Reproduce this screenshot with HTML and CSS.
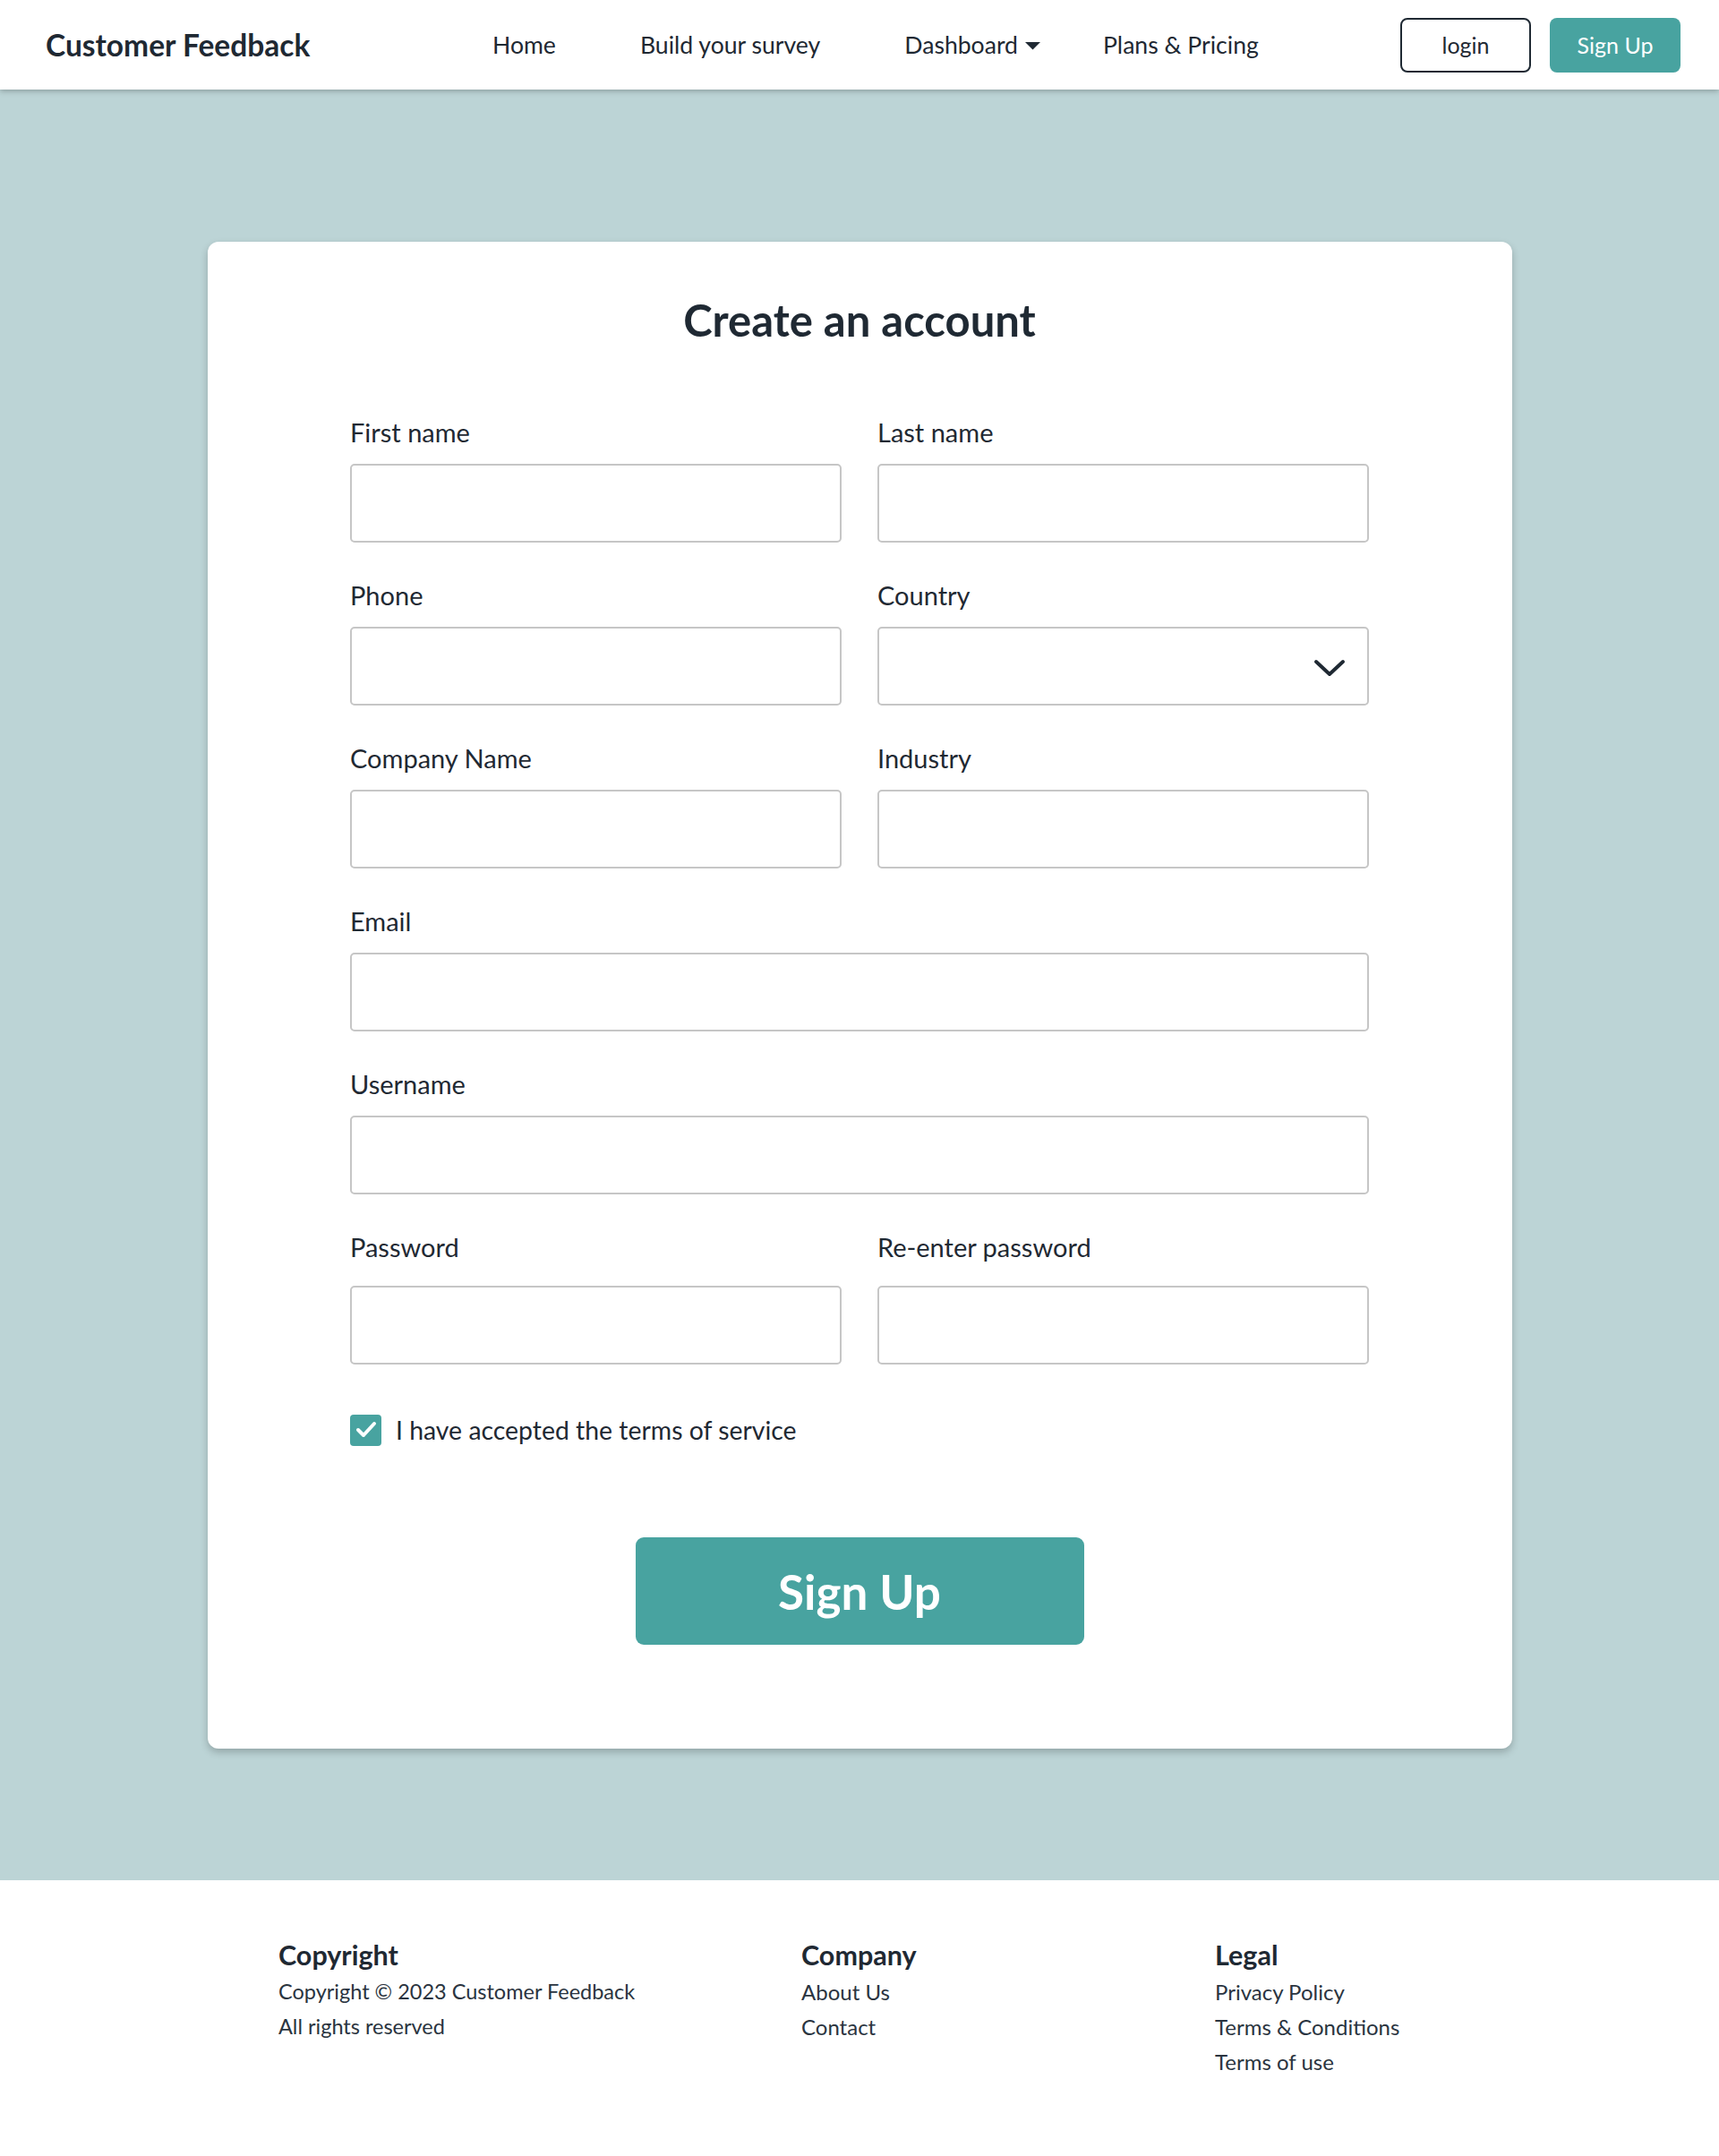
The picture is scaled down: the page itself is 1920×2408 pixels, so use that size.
FILE: index.html
```html
<!DOCTYPE html>
<html lang="en">
<head>
    <meta charset="UTF-8">
    <meta name="viewport" content="width=device-width, initial-scale=1.0">
    <title>Customer Feedback - Sign Up</title>
    <link rel="stylesheet" href="styles.css">
</head>
<body>
    <header class="topbar">
        <div class="brand">Customer Feedback</div>
        <nav class="nav">
            <a href="#">Home</a>
            <a href="#">Build your survey</a>
            <a href="#" class="nav-dropdown">Dashboard
                <svg class="caret" width="19" height="10" viewBox="0 0 19 10"><path d="M1 1h17L9.5 9.5z" fill="#1f2933"/></svg>
            </a>
            <a href="#">Plans &amp; Pricing</a>
        </nav>
        <div class="auth">
            <button class="btn-login">login</button>
            <button class="btn-signup">Sign Up</button>
        </div>
    </header>

    <main class="page">
        <div class="card">
            <h1>Create an account</h1>
            <form class="signup-form">
                <div class="field">
                    <label>First name</label>
                    <input type="text">
                </div>
                <div class="field">
                    <label>Last name</label>
                    <input type="text">
                </div>
                <div class="field">
                    <label>Phone</label>
                    <input type="text">
                </div>
                <div class="field">
                    <label>Country</label>
                    <div class="select-wrap">
                        <select><option></option></select>
                        <svg class="chevron" width="36" height="20" viewBox="0 0 36 20"><path d="M3 3l15 14L33 3" fill="none" stroke="#1f2933" stroke-width="4" stroke-linecap="round" stroke-linejoin="round"/></svg>
                    </div>
                </div>
                <div class="field">
                    <label>Company Name</label>
                    <input type="text">
                </div>
                <div class="field">
                    <label>Industry</label>
                    <input type="text">
                </div>
                <div class="field full">
                    <label>Email</label>
                    <input type="email">
                </div>
                <div class="field full">
                    <label>Username</label>
                    <input type="text">
                </div>
                <div class="field tall">
                    <label>Password</label>
                    <input type="password">
                </div>
                <div class="field tall">
                    <label>Re-enter password</label>
                    <input type="password">
                </div>
            </form>

            <div class="terms">
                <span class="check">
                    <svg width="24" height="20" viewBox="0 0 24 20"><path d="M3 10l6 6L21 3" fill="none" stroke="#fff" stroke-width="4" stroke-linecap="round" stroke-linejoin="round"/></svg>
                </span>
                I have accepted the terms of service
            </div>

            <button class="btn-submit">Sign Up</button>
        </div>
    </main>

    <footer class="footer">
        <div class="footer-col col-copy">
            <h3>Copyright</h3>
            <p>Copyright © 2023 Customer Feedback</p>
            <p>All rights reserved</p>
        </div>
        <div class="footer-col col-company">
            <h3>Company</h3>
            <a href="#">About Us</a>
            <a href="#">Contact</a>
        </div>
        <div class="footer-col">
            <h3>Legal</h3>
            <a href="#">Privacy Policy</a>
            <a href="#">Terms &amp; Conditions</a>
            <a href="#">Terms of use</a>
        </div>
    </footer>
</body>
</html>
```

FILE: styles.css
```css
body {
    margin: 0;
    font-family: Lato, "Open Sans", sans-serif;
    color: #1f2933;
    background: #bcd4d6;
}
a {
    color: inherit;
    text-decoration: none;
}

/* Top bar */
.topbar {
    height: 100px;
    background: #fff;
    display: flex;
    align-items: center;
    padding: 0 43px 0 51px;
    box-shadow: 0 2px 6px rgba(0, 0, 0, 0.25);
    position: relative;
}
.brand {
    font-size: 33.5px;
    font-weight: 700;
    width: 295px;
    white-space: nowrap;
}
.nav {
    display: flex;
    align-items: center;
    gap: 94px;
    margin-left: 204px;
    font-size: 26.6px;
}
.nav-dropdown {
    display: flex;
    align-items: center;
    gap: 7px;
    margin-right: -25px;
}
.caret {
    margin-top: 2px;
}
.auth {
    margin-left: auto;
    display: flex;
    gap: 21px;
}
.auth button {
    width: 146px;
    height: 61px;
    border-radius: 8px;
    font-family: inherit;
    font-size: 25px;
    cursor: pointer;
}
.btn-login {
    background: #fff;
    border: 2px solid #1f2933;
    color: #1f2933;
}
.btn-signup {
    background: #48a3a0;
    border: none;
    color: #fff;
}

/* Card */
.page {
    padding: 170px 0 147px;
}
.card {
    width: 1457px;
    margin: 0 auto;
    box-sizing: border-box;
    background: #fff;
    border-radius: 12px;
    box-shadow: 0 4px 8px rgba(0, 0, 0, 0.22);
    padding: 59px 0 116px;
}
h1 {
    margin: 0 0 80px;
    text-align: center;
    font-size: 49px;
    line-height: 56px;
    font-weight: 700;
}
.signup-form {
    width: 1138px;
    margin: 0 auto;
    display: grid;
    grid-template-columns: 1fr 1fr;
    column-gap: 40px;
    row-gap: 41px;
}
.field.full {
    grid-column: 1 / 3;
}
.field label {
    display: block;
    font-size: 29px;
    line-height: 36px;
    margin-bottom: 17px;
}
.field.tall label {
    margin-bottom: 25px;
}
.field input,
.field select {
    display: block;
    width: 100%;
    height: 88px;
    box-sizing: border-box;
    border: 2px solid #c6c6c6;
    border-radius: 5px;
    background: #fff;
    font-family: inherit;
    font-size: 26px;
    padding: 0 16px;
    appearance: none;
}
.select-wrap {
    position: relative;
}
.chevron {
    position: absolute;
    right: 26px;
    top: 36px;
}

/* Terms */
.terms {
    width: 1138px;
    margin: 55px auto 0;
    display: flex;
    align-items: center;
    gap: 16px;
    font-size: 28.4px;
    line-height: 36px;
}
.check {
    width: 35px;
    height: 35px;
    border-radius: 4px;
    background: #48a3a0;
    display: flex;
    align-items: center;
    justify-content: center;
}
.btn-submit {
    display: block;
    margin: 102px auto 0;
    width: 501px;
    height: 120px;
    border: none;
    border-radius: 9px;
    background: #48a3a0;
    color: #fff;
    font-family: inherit;
    font-size: 53px;
    font-weight: 700;
    cursor: pointer;
}

/* Footer */
.footer {
    background: #fff;
    display: flex;
    padding: 64px 0 88px 311px;
}
.footer-col {
    display: flex;
    flex-direction: column;
}
.col-copy {
    width: 584px;
}
.col-company {
    width: 462px;
}
.footer-col h3 {
    margin: 0 0 2px;
    font-size: 30.5px;
    line-height: 39px;
    font-weight: 700;
}
.footer-col p,
.footer-col a {
    margin: 0;
    font-size: 24px;
    line-height: 39px;
    color: #2a3440;
}
.col-copy p {
    font-size: 23.5px;
}
```
